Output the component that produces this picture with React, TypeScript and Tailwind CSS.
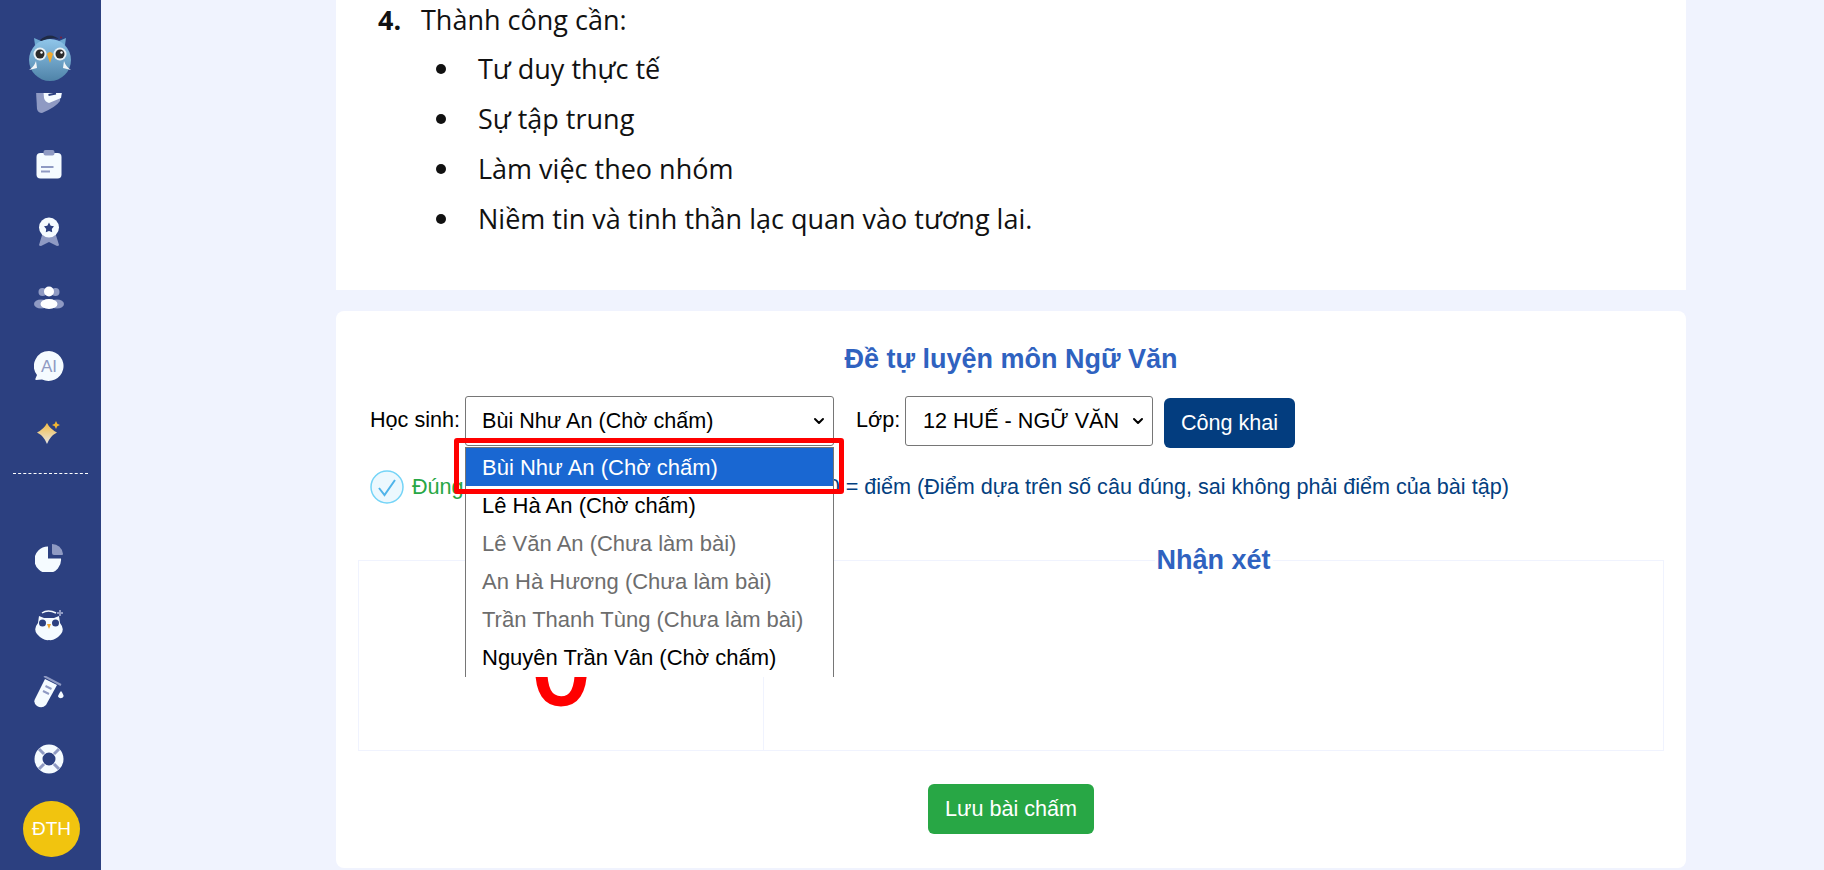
import { ChevronDown } from 'lucide-react';

const WHITE = '#f5fbff';
const FADED = '#8f9ac3';

const OwlLogo = () => (
  <svg width="46" height="50" viewBox="0 0 46 50">
    <defs>
      <linearGradient id="owlBody" x1="0" y1="0" x2="0" y2="1">
        <stop offset="0" stopColor="#90c6ea" />
        <stop offset="1" stopColor="#4f83a8" />
      </linearGradient>
    </defs>
    <path d="M8 13 L7 6 L14 9 H32 L39 6 L38 13 Z" fill="#6ea9d2" />
    <circle cx="23" cy="28" r="21" fill="url(#owlBody)" />
    <path d="M13 8 Q23 -1 33 8 L32 7 Q23 5 14 9 Z" fill="#1f2a44" />
    <circle cx="34" cy="5.5" r="1" fill="#7a1f3d" />
    <circle cx="13" cy="22" r="6.5" fill="#e9f1f5" />
    <circle cx="33" cy="22" r="6.5" fill="#e9f1f5" />
    <circle cx="13" cy="22" r="4.5" fill="#2b2b2b" />
    <circle cx="33" cy="22" r="4.5" fill="#2b2b2b" />
    <circle cx="14.5" cy="20.5" r="1.2" fill="#fff" />
    <circle cx="34.5" cy="20.5" r="1.2" fill="#fff" />
    <path d="M20 22 Q23 18 26 22 L23 31 Z" fill="#f0a92e" />
    <path d="M2 38 Q7 35 9 29 L10 36 Z" fill="#f2f6f8" />
    <path d="M44 38 Q39 35 37 29 L36 36 Z" fill="#f2f6f8" />
  </svg>
);

const IconDoc = () => (
  <svg width="30" height="30" viewBox="0 0 30 30">
    <path d="M2 8 L27 4 L26 18 Q22 24 8 30 Q4 30 3 26 Z" fill={FADED} />
    <path d="M9 3 L29 3 L27 15 L15 20 Q11 19 10 15 Z" fill={WHITE} />
    <path d="M15 8 L23 6.5 M14.5 12 L22 10.5" stroke="#2c4080" strokeWidth="2" />
  </svg>
);

const IconClipboard = () => (
  <svg width="26" height="30" viewBox="0 0 26 30">
    <rect x="0.5" y="3" width="25" height="25.500" rx="4" fill={WHITE} />
    <rect x="7.500" y="0" width="11" height="5.500" rx="2" fill={FADED} />
    <path d="M5 17 H17.500 M5 21.500 H14" stroke={FADED} strokeWidth="2" />
  </svg>
);

const IconAward = () => (
  <svg width="24" height="30" viewBox="0 0 24 30">
    <path d="M6 15 L2 28 Q2 29 4 29 L12 25 L20 29 Q22 29 22 28 L18 15 Z" fill={FADED} />
    <circle cx="12" cy="10.500" r="10" fill={WHITE} />
    <path d="M12 5.500 L13.700 8.700 L17 9.300 L14.800 12 L15.200 15.200 L12 14 L8.800 15.200 L9.200 12 L7 9.300 L10.300 8.700 Z" fill="#2c4080" />
  </svg>
);

const IconUsers = () => (
  <svg width="30" height="25" viewBox="0 0 30 25">
    <circle cx="8.500" cy="6" r="4" fill={FADED} />
    <circle cx="21.500" cy="6" r="4" fill={FADED} />
    <ellipse cx="7" cy="18" rx="7" ry="4.500" fill={FADED} />
    <ellipse cx="23" cy="18" rx="7" ry="4.500" fill={FADED} />
    <circle cx="15" cy="5.500" r="5" fill="#fff" />
    <ellipse cx="15" cy="18" rx="8.500" ry="5" fill="#fff" />
  </svg>
);

const IconAI = () => (
  <svg width="30" height="30" viewBox="0 0 30 30">
    <path d="M15 0 A15 15 0 1 1 8 28.500 L2 29 Q1 29 1.500 27.500 L3 24 A15 15 0 0 1 15 0 Z" fill={WHITE} />
    <text x="15" y="21" textAnchor="middle" fontSize="17" fill={FADED} fontFamily="Liberation Sans, sans-serif">
      AI
    </text>
  </svg>
);

const IconSparkle = () => (
  <svg width="24" height="24" viewBox="0 0 24 24">
    <defs>
      <linearGradient id="spark" x1="0" y1="0" x2="0" y2="1">
        <stop offset="0" stopColor="#f3bc45" />
        <stop offset="1" stopColor="#e8e6e4" />
      </linearGradient>
    </defs>
    <path d="M10 2 Q13 8 20 11.500 Q13 15 10 23 Q7 15 0 11.500 Q7 8 10 2 Z" fill="url(#spark)" />
    <path d="M19 0 L20.300 2.700 L23 4 L20.300 5.300 L19 8 L17.700 5.300 L15 4 L17.700 2.700 Z" fill="#f2b632" />
  </svg>
);

const IconPie = () => (
  <svg width="28" height="28" viewBox="0 0 28 28">
    <path d="M13 2.500 V14.500 H26 A13.300 13.300 0 1 1 13 2.500 Z" fill={WHITE} />
    <path d="M17 0 A11 11 0 0 1 28 10 Q28 11 27 11 H19 Q17 11 17 9 Z" fill={FADED} />
  </svg>
);

const IconOwlSmall = () => (
  <svg width="30" height="32" viewBox="0 0 30 32">
    <path d="M8 4 Q14 0 22 4" stroke={WHITE} strokeWidth="1.500" fill="none" />
    <path d="M26 1 V7 M23 4 H29" stroke={FADED} strokeWidth="2" />
    <path d="M5 7 L10 9 H20 L25 7 L26 14 Q31 20 27 25 Q21 32 15 31 Q9 32 3 25 Q-1 20 4 14 Z" fill={WHITE} />
    <circle cx="8.500" cy="14" r="3.500" fill="#2c4080" />
    <circle cx="21.500" cy="14" r="3.500" fill="#2c4080" />
    <path d="M13 15 H17 L15 20 Z" fill="#f2a82e" />
  </svg>
);

const IconFlask = () => (
  <svg width="30" height="32" viewBox="0 0 30 32">
    <path d="M10 0 L27 9" stroke={FADED} strokeWidth="2" />
    <path d="M11 3 L23 9 L12 29 Q8 33 3 30 Q-1 27 1 23 Z" fill={WHITE} />
    <path d="M11.500 10 L17.500 13 M9 15 L15 18" stroke={FADED} strokeWidth="2" />
    <path d="M27 15 Q30 19 29.500 20.500 A3 3 0 0 1 24 20.500 Q24 19 27 15 Z" fill={WHITE} />
  </svg>
);

const IconLifebuoy = () => (
  <svg width="30" height="30" viewBox="0 0 30 30">
    <circle cx="15" cy="15" r="10.500" fill="none" stroke={WHITE} strokeWidth="8" />
    <path d="M5 5 L10 10 M25 5 L20 10 M5 25 L10 20 M25 25 L20 20" stroke={FADED} strokeWidth="3" />
  </svg>
);

const SideRow = ({ children }: { children: React.ReactNode }) => (
  <div className="flex h-[67px] items-center justify-center pr-[4px]">{children}</div>
);

const options = [
  { label: 'Bùi Như An (Chờ chấm)', cls: 'bg-[#1967d2] text-white' },
  { label: 'Lê Hà An (Chờ chấm)', cls: 'text-black' },
  { label: 'Lê Văn An (Chưa làm bài)', cls: 'text-[#6d6d6d]' },
  { label: 'An Hà Hương (Chưa làm bài)', cls: 'text-[#6d6d6d]' },
  { label: 'Trần Thanh Tùng (Chưa làm bài)', cls: 'text-[#6d6d6d]' },
  { label: 'Nguyên Trần Vân (Chờ chấm)', cls: 'text-black' },
];

const bullets = [
  'Tư duy thực tế',
  'Sự tập trung',
  'Làm việc theo nhóm',
  'Niềm tin và tinh thần lạc quan vào tương lai.',
];

export default function App() {
  return (
    <div className="flex h-[870px] w-[1824px] overflow-hidden bg-[#f0f3fe] font-['Liberation_Sans',sans-serif] text-[21.6px] text-black">
      {/* Sidebar */}
      <aside className="flex w-[101px] shrink-0 flex-col bg-[#2c4080]">
        <div className="flex h-[93px] items-end justify-center pr-[1px] pb-[11px]">
          <OwlLogo />
        </div>
        <div className="h-[374px] overflow-hidden">
          <div className="-mt-[29px]">
            <SideRow>
              <IconDoc />
            </SideRow>
            <SideRow>
              <IconClipboard />
            </SideRow>
            <SideRow>
              <IconAward />
            </SideRow>
            <SideRow>
              <IconUsers />
            </SideRow>
            <SideRow>
              <IconAI />
            </SideRow>
            <SideRow>
              <IconSparkle />
            </SideRow>
          </div>
        </div>
        <div className="mx-[13px] mt-[6px] border-t border-dashed border-white" />
        <div className="mt-[50px]">
          <SideRow>
            <IconPie />
          </SideRow>
          <SideRow>
            <IconOwlSmall />
          </SideRow>
          <SideRow>
            <IconFlask />
          </SideRow>
          <SideRow>
            <IconLifebuoy />
          </SideRow>
        </div>
        <div className="mt-[9px] ml-[23px] flex h-[56px] w-[57px] items-center justify-center rounded-full bg-[#f1c40f] text-[19px] text-white">
          ĐTH
        </div>
      </aside>

      {/* Content */}
      <main className="ml-[235px] w-[1350px]">
        <section className="flow-root h-[290px] bg-white pl-[42px] font-['Open_Sans',sans-serif] text-[27px] leading-[50px] text-[#111]">
          <div className="-mt-[5px] flex">
            <span className="w-[43px] font-bold">4.</span>
            <span>Thành công cần:</span>
          </div>
          <ul className="-mt-[1px] ml-[58px]">
            {bullets.map((b) => (
              <li key={b} className="flex items-center">
                <span className="mr-[32px] h-[10px] w-[10px] rounded-full bg-[#111]" />
                <span>{b}</span>
              </li>
            ))}
          </ul>
        </section>

        <section className="mt-[21px] h-[557px] rounded-lg bg-white px-[22px] pt-[32px]">
          <h2 className="text-center text-[27px] leading-[32px] font-bold text-[#2f62c0]">Đề tự luyện môn Ngữ Văn</h2>

          <div className="mt-[21px] flex items-start pl-[12px]">
            <label className="mt-[12px] w-[95px] leading-[24px]">Học sinh:</label>
            <div className="relative w-[369px]">
              <div className="flex h-[50px] items-center justify-between rounded-[3px] border border-[#767676] bg-white pr-[6px] pl-[16px]">
                <span>Bùi Như An (Chờ chấm)</span>
                <ChevronDown className="h-4 w-4" strokeWidth={3} />
              </div>

              {/* open list */}
              <div className="absolute top-[51px] left-0 z-10 h-[230px] w-[369px] overflow-hidden border-x border-t border-[#767676] bg-white text-[22px]">
                {options.map((o) => (
                  <div key={o.label} className={`flex h-[38px] items-center pl-[16px] ${o.cls}`}>
                    {o.label}
                  </div>
                ))}
              </div>

              {/* annotation */}
              <div className="absolute top-[42px] -left-[11px] z-20 h-[56px] w-[390px] rounded-[3px] border-[5px] border-[#ff0000]" />
            </div>

            <label className="mt-[12px] ml-[22px] w-[49px] leading-[24px]">Lớp:</label>
            <div className="flex h-[50px] w-[248px] items-center justify-between rounded-[3px] border border-[#767676] bg-white pr-[6px] pl-[17px]">
              <span>12 HUẾ - NGỮ VĂN</span>
              <ChevronDown className="h-4 w-4" strokeWidth={3} />
            </div>
            <button className="mt-[2px] ml-[11px] h-[50px] w-[131px] rounded-md bg-[#033d7f] text-white">Công khai</button>
          </div>

          <div className="mt-[22px] flex items-center pl-[12px]">
            <svg width="34" height="34" viewBox="0 0 34 34">
              <circle cx="17" cy="17" r="16" fill="#ecf8fe" stroke="#74d4f7" strokeWidth="1.500" />
              <path d="M9 18 L14.500 25 L25 10" fill="none" stroke="#4fb4ea" strokeWidth="2" />
            </svg>
            <span className="ml-[8px] text-[#28a745]">Đúng</span>
            <span className="ml-[364px] text-[#03407f]">0 = điểm (Điểm dựa trên số câu đúng, sai không phải điểm của bài tập)</span>
          </div>

          <div className="mt-[56px] flex h-[191px] border border-[#f0f3fe]">
            <div className="h-full w-[404px] overflow-hidden pt-[29px] text-center text-[102px] leading-[159px] text-[#ff0000] [-webkit-text-stroke:3px_#ff0000]">0</div>
            <div className="relative flex-1 border-l border-[#f0f3fe]">
              <h3 className="absolute -top-[16px] left-1/2 -translate-x-1/2 bg-white px-[2px] text-[27px] leading-[30px] font-bold whitespace-nowrap text-[#2f62c0]">
                Nhận xét
              </h3>
            </div>
          </div>

          <div className="mt-[33px] flex justify-center">
            <button className="h-[50px] w-[166px] rounded-md bg-[#28a745] text-white">Lưu bài chấm</button>
          </div>
        </section>
      </main>
    </div>
  );
}
